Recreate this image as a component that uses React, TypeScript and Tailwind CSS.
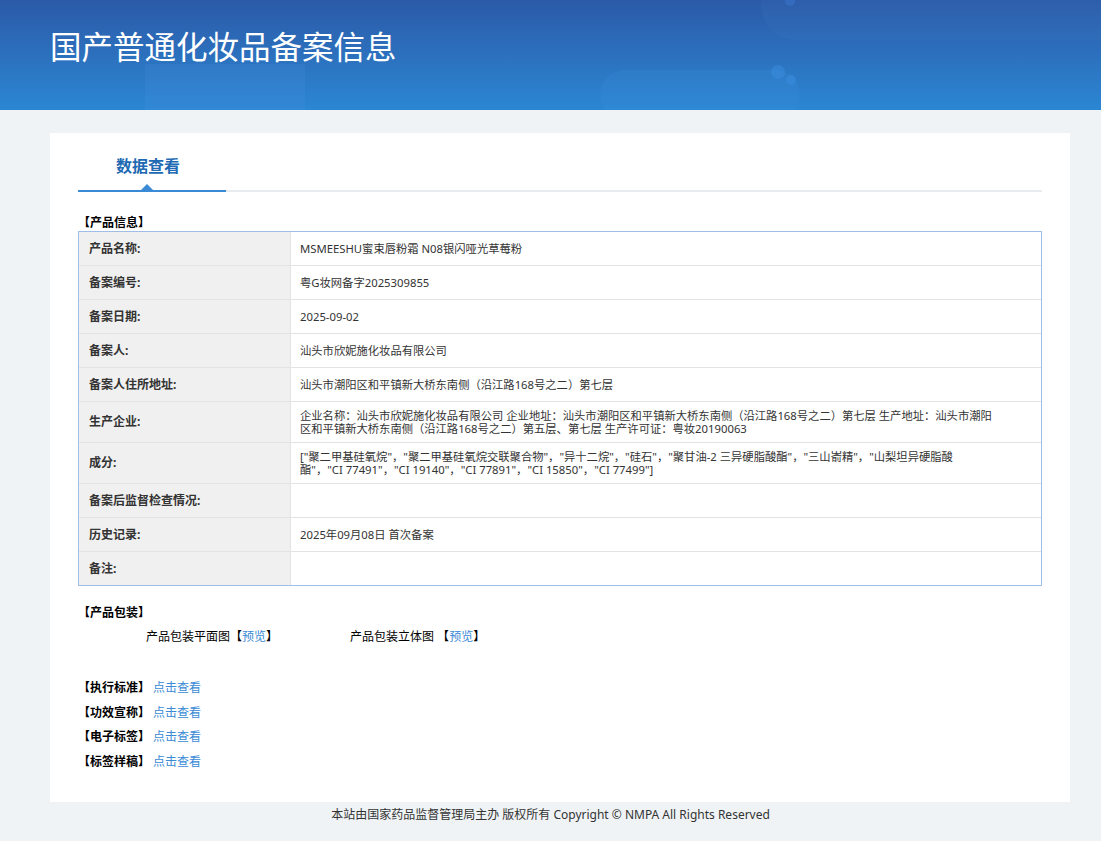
import React from 'react';

const rows: { label: string; value: React.ReactNode; tall?: boolean; pr?: string }[] = [
  { label: '产品名称:', value: 'MSMEESHU蜜束唇粉霜 N08银闪哑光草莓粉' },
  { label: '备案编号:', value: '粤G妆网备字2025309855' },
  { label: '备案日期:', value: '2025-09-02' },
  { label: '备案人:', value: '汕头市欣妮施化妆品有限公司' },
  { label: '备案人住所地址:', value: '汕头市潮阳区和平镇新大桥东南侧（沿江路168号之二）第七层' },
  {
    label: '生产企业:',
    value:
      '企业名称：汕头市欣妮施化妆品有限公司 企业地址：汕头市潮阳区和平镇新大桥东南侧（沿江路168号之二）第七层 生产地址：汕头市潮阳区和平镇新大桥东南侧（沿江路168号之二）第五层、第七层 生产许可证：粤妆20190063',
    tall: true,
    pr: 'pr-[40px]',
  },
  {
    label: '成分:',
    value:
      '["聚二甲基硅氧烷"，"聚二甲基硅氧烷交联聚合物"，"异十二烷"，"硅石"，"聚甘油-2 三异硬脂酸酯"，"三山嵛精"，"山梨坦异硬脂酸酯"，"CI 77491"，"CI 19140"，"CI 77891"，"CI 15850"，"CI 77499"]',
    tall: true,
    pr: 'pr-[72px]',
  },
  { label: '备案后监督检查情况:', value: '' },
  { label: '历史记录:', value: '2025年09月08日 首次备案' },
  { label: '备注:', value: '' },
];

const links = ['【执行标准】', '【功效宣称】', '【电子标签】', '【标签样稿】'];

export default function App() {
  return (
    <div
      className="min-h-[841px] bg-[#f0f3f6] text-[#333]"
      style={{ fontFamily: '"Noto Sans", "Noto Sans CJK SC", sans-serif' }}
    >
      {/* header banner */}
      <div className="relative h-[110px] overflow-hidden bg-gradient-to-b from-[#2b5aa8] to-[#2b87d3]">
        <div className="absolute left-[145px] top-[64px] h-[50px] w-[160px] bg-[#4a8fe0] opacity-20" />
        <div className="absolute right-[-60px] top-[-30px] h-[70px] w-[400px] rounded-full bg-[#4a86d0] opacity-10" />
        <div className="absolute left-[600px] top-[70px] h-[50px] w-[200px] rounded-full bg-[#3a90da] opacity-20" />
        <div className="absolute left-[771px] top-[65px] h-[14px] w-[14px] rounded-full bg-[#3a8ee0] opacity-50" />
        <div className="absolute left-[786px] top-[75px] h-[10px] w-[10px] rounded-full bg-[#3a8ee0] opacity-50" />
        <div className="absolute left-[785px] top-[-4px] h-[10px] w-[10px] rounded-full bg-[#3a78d0] opacity-50" />
        <h1 className="relative pl-[50px] pt-[28px] text-[31.5px] leading-[38px] text-white">
          国产普通化妆品备案信息
        </h1>
      </div>

      <div className="ml-[50px] mr-[31px] mt-[23px] bg-white px-[28px] pb-[32px] pt-[22px]">
        {/* tab */}
        <div className="flex border-b-2 border-[#e8ecf0]">
          <div className="relative -mb-[2px] w-[148px] border-b-2 border-[#3a8ad6] pb-[13px] pl-[38px] text-[16px] leading-[22px] font-bold text-[#2069b3]">
            数据查看
            <span className="absolute bottom-0 left-[63px] h-0 w-0 border-x-[6px] border-b-[6px] border-x-transparent border-b-[#3a8ad6]" />
          </div>
        </div>

        <div className="mt-[23px] text-[12px] font-bold leading-[16px] text-black">【产品信息】</div>

        <div className="border border-[#9fbde6]">
          {rows.map((r, i) => (
            <div key={i} className={`flex ${i > 0 ? 'border-t border-[#e3e3e3]' : ''}`}>
              <div className="flex w-[212px] shrink-0 items-center border-r border-[#e3e3e3] bg-[#f0f0f0] pl-[10px] text-[12px] font-bold text-[#333]">
                {r.label}
              </div>
              <div
                className={`flex flex-1 items-center pl-[9px] text-[11.3px] text-[#333] ${r.pr ?? 'pr-[40px]'} ${
                  r.tall ? 'min-h-[40px] py-[6px] leading-[13px]' : 'h-[33px] leading-[16px]'
                }`}
              >
                <span>{r.value}</span>
              </div>
            </div>
          ))}
        </div>

        <div className="mt-[19px] text-[12px] font-bold leading-[16px] text-black">【产品包装】</div>
        <div className="mt-[8px] flex text-[12px] leading-[16px] text-black">
          <span className="ml-[68px] w-[204px]">
            产品包装平面图【<span className="text-[#3a8ad6]">预览</span>】
          </span>
          <span>
            产品包装立体图 【<span className="text-[#3a8ad6]">预览</span>】
          </span>
        </div>

        <div className="mt-[35px] flex flex-col gap-[8.7px]">
          {links.map((l) => (
            <div key={l} className="flex text-[12px] leading-[16px]">
              <span className="w-[75px] font-bold text-black">{l}</span>
              <span className="text-[#3a8ad6]">点击查看</span>
            </div>
          ))}
        </div>
      </div>

      <div className="pt-[4px] text-center text-[12px] leading-[18px] text-[#333]">
        本站由国家药品监督管理局主办 版权所有 Copyright © NMPA All Rights Reserved
      </div>
    </div>
  );
}
